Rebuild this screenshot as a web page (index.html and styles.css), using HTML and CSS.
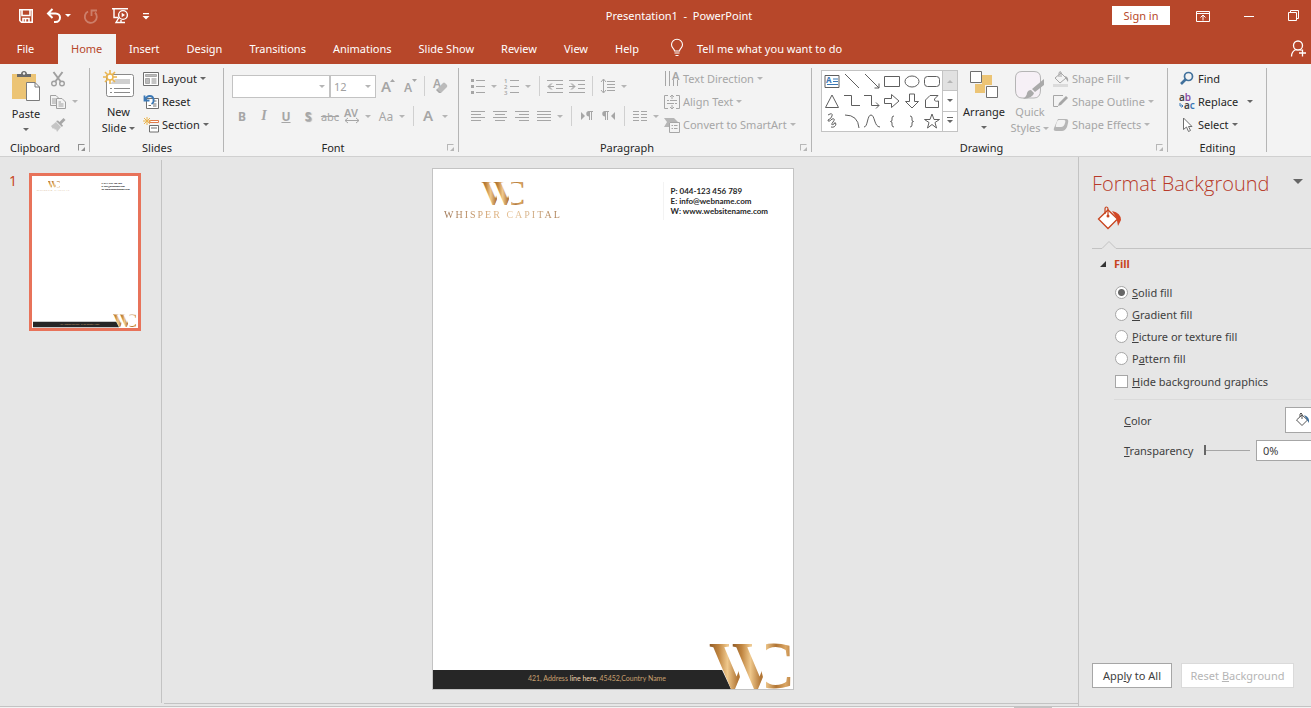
FILE: index.html
```html
<!DOCTYPE html>
<html lang="en">
<head>
    <meta charset="UTF-8">
    <meta name="viewport" content="width=device-width, initial-scale=1.0">
    <title>Presentation1 - PowerPoint</title>
    <link rel="stylesheet" href="styles.css">
</head>
<body>

    <!-- gradient and monogram shared by the slide and its thumbnail -->
    <svg class="defs" width="0" height="0" aria-hidden="true">
        <defs>
            <linearGradient id="gold" x1="0" y1="0" x2="1" y2="0">
                <stop offset="0" stop-color="#8f5a26"/>
                <stop offset="0.2" stop-color="#c08540"/>
                <stop offset="0.38" stop-color="#efc88c"/>
                <stop offset="0.6" stop-color="#b07434"/>
                <stop offset="0.8" stop-color="#dba765"/>
                <stop offset="1" stop-color="#a86c30"/>
            </linearGradient>
            <clipPath id="cut-v">
                <path d="M0 0H22L31 34L26 46H0Z"/>
            </clipPath>
            <clipPath id="cut-c">
                <path d="M57 0H82V17H70V9H57ZM57 38H70V34H82V46H57Z"/>
            </clipPath>
            <symbol id="monogram" viewBox="0 0 84 46">
                <g font-family="Liberation Serif, serif" font-weight="bold" font-size="67" fill="url(#gold)">
                    <text x="0" y="45" clip-path="url(#cut-v)">V</text>
                    <g transform="translate(23 0)"><text x="0" y="45" clip-path="url(#cut-v)">V</text></g>
                    <text x="38" y="45" clip-path="url(#cut-c)">C</text>
                </g>
            </symbol>
        </defs>
    </svg>

    <header class="titlebar">
        <div class="quick-access">
            <button title="Save"><svg width="16" height="16" viewBox="0 0 16 16" fill="none" stroke="#fff" stroke-width="1.6"><path d="M1.8 1.8H14.2V14.2H3.5L1.8 12.5Z"/><path d="M4 2V7.5H12V2M5 14V10.5H11V14" /><path d="M7.5 11V14"/></svg></button>
            <button class="undo" title="Undo"><svg width="16" height="16" viewBox="0 0 16 16" fill="none" stroke="#fff" stroke-width="2"><path d="M6.500 1L2 5.500L6.500 10M2 5.500H9.500C12.500 5.500 14 7.500 14 9.500S12.500 14 9.500 14H8"/></svg><i class="caret"></i></button>
            <button class="faded" title="Repeat"><svg width="16" height="16" viewBox="0 0 16 16" fill="none" stroke="#fff" stroke-width="1.8"><path d="M5 3.500A6 6 0 1 0 12 4.500M8.500 8V2.500H14"/></svg></button>
            <button title="Start From Beginning"><svg width="18" height="17" viewBox="0 0 18 17" fill="none" stroke="#fff" stroke-width="1.4"><path d="M1 1.7H17M3 2V10.5H7M8 10.5L5 15.5H14M10 15.5V13"/><circle cx="12" cy="8" r="4.4" fill="#b7472a"/><path d="M10.7 5.8V10.2L14 8Z" fill="#fff" stroke="none"/></svg></button>
            <button title="Customize"><svg width="10" height="10" viewBox="0 0 10 10" fill="#fff"><path d="M2 2H8V3.2H2ZM1.5 5H8.5L5 8.5Z"/></svg></button>
        </div>
        <h1>Presentation1 &nbsp;-&nbsp; PowerPoint</h1>
        <div class="window-controls">
            <button class="sign-in">Sign in</button>
            <button title="Ribbon Display Options"><svg width="14" height="12" viewBox="0 0 14 12" fill="none" stroke="#fff"><path d="M.5 1.5H13.5V11.5H.5ZM.5 3.5H13.5M7 10.5V5.5M4.5 7.5L7 5L9.5 7.5"/></svg></button>
            <button title="Minimize"><svg width="10" height="10" viewBox="0 0 10 10" stroke="#fff"><path d="M0 5.5H10"/></svg></button>
            <button title="Restore"><svg width="11" height="11" viewBox="0 0 11 11" fill="none" stroke="#fff"><path d="M.5 2.5H8.5V10.5H.5ZM2.5 2.5V.5H10.5V8.5H8.5"/></svg></button>
        </div>
    </header>

    <nav class="tabs">
        <button class="file">File</button>
        <button class="active">Home</button>
        <button>Insert</button>
        <button>Design</button>
        <button>Transitions</button>
        <button>Animations</button>
        <button>Slide Show</button>
        <button>Review</button>
        <button>View</button>
        <button>Help</button>
        <button class="tell-me"><svg width="14" height="18" viewBox="0 0 14 18" fill="none" stroke="#fff" stroke-width="1.1"><path d="M4.500 12C4.500 9.500 1.500 9 1.500 5.800A5.200 5.200 0 0 1 12.500 5.800C12.500 9 9.500 9.500 9.500 12ZM4.500 14H9.500M5.500 16.500H8.500"/></svg>Tell me what you want to do</button>
        <button class="share" title="Share"><svg width="17" height="18" viewBox="0 0 17 18" fill="none" stroke="#fff" stroke-width="1.3"><circle cx="8" cy="5.500" r="4.500"/><path d="M1.500 16.500C1.500 12.500 3.500 10.500 6 9.500M10 9.500L11.500 10.500M12.500 9.500V16.500M9 13H16"/></svg></button>
    </nav>

    <div class="ribbon">
        <section class="group clipboard">
            <div class="group-body">
                <button class="big"><svg width="30" height="32" viewBox="0 0 30 32"><path d="M1 4H25V29H1Z" fill="#ecc475"/><path d="M6 7V4H10C10 0 16 0 16 4H20V7Z" fill="#6a6a6a"/><circle cx="13" cy="3.500" r="1.200" fill="#f3f3f3"/><path d="M15.500 12.500H24L28.500 17V30.500H15.500Z" fill="#fff" stroke="#7b7b7b"/><path d="M24 12.500V17H28.500" fill="none" stroke="#7b7b7b"/></svg><span>Paste</span><i class="caret"></i></button>
                <div class="stack off">
                    <button title="Cut"><svg class="paper" width="16" height="16" viewBox="0 0 16 16" stroke="#a0a0a0" stroke-width="1.400"><path d="M3.500 1L11 11M12.500 1L5 11" stroke-width="2"/><circle cx="4" cy="12.500" r="2.300"/><circle cx="12" cy="12.500" r="2.300"/></svg></button>
                    <button title="Copy"><svg class="paper" width="16" height="16" viewBox="0 0 16 16" stroke="#a0a0a0"><path d="M.5 1.500H6L8.500 4V11.500H.5ZM2 5H6M2 7H6M2 9H6"/><path d="M6.500 4.500H12L15.500 8V14.500H6.500ZM8.500 8H11M8.500 10H13.500M8.500 12H13.500"/></svg><i class="caret"></i></button>
                    <button title="Format Painter"><svg width="16" height="16" viewBox="0 0 16 16"><path d="M1 9L6 5L11 10L7 15L6 12L5 13L4 11L3 12Z" opacity=".6"/><path d="M6 4L12 10L13 8.500L11.500 7L15.500 3L13.500 1L9.500 5L8 3.500Z"/></svg></button>
                </div>
            </div>
            <h2>Clipboard</h2><i class="launcher"></i>
        </section>

        <section class="group slides">
            <div class="group-body">
                <button class="big"><svg width="32" height="30" viewBox="0 0 32 30"><path d="M3.500 6.500Q3.500 4.500 5.500 4.500H28.500Q30.500 4.500 30.500 6.500V24.500Q30.500 26.500 28.500 26.500H5.500Q3.500 26.500 3.500 24.500Z" fill="#fff" stroke="#8a8a8a"/><path d="M12 9H27V14H8V13Z" fill="#d0d0d0"/><path d="M7 18.500H9M11 18.500H27M7 22.500H9M11 22.500H27" stroke="#8a8a8a"/><g stroke="#eab54f" stroke-width="1.600"><path d="M7 0V4M7 10V14M0 7H4M10 7H14M2 2L5 5M9 9L12 12M12 2L9 5M2 12L5 9"/></g><circle cx="7" cy="7" r="3" fill="#fff" stroke="#eab54f" stroke-width="1.500"/></svg><span>New</span><span>Slide<i class="caret"></i></span></button>
                <div class="stack">
                    <button><svg width="16" height="16" viewBox="0 0 16 16" fill="#fff" stroke="#6f6f6f"><path d="M.5 1.500H15.500V14.500H.5Z"/><path d="M2.500 3.500H13.500V5.500H2.500ZM2.500 7.500H6.500V12.500H2.500Z" fill="#bbb" stroke="#aaa"/><path d="M8.500 8H13.500M8.500 10H13.500M8.500 12H13.500" stroke="#888"/></svg>Layout<i class="caret"></i></button>
                    <button><svg width="16" height="16" viewBox="0 0 16 16" fill="#fff" stroke="#6f6f6f"><path d="M3.500 4.500H15.500V14.500H3.500Z"/><path d="M10 7H13.500M5.500 11.500H8M10 10H13.500M10 12H13.500"/><path d="M1.500 1.500V6.500H6.500M2 6C4 .5 10 1 10.500 5.500C11 8 9.500 9.500 8.500 10" fill="none" stroke="#3b78b5" stroke-width="1.800"/></svg>Reset</button>
                    <button><svg width="16" height="16" viewBox="0 0 16 16" fill="#fff" stroke="#6f6f6f"><path d="M6.500 3.500H15.500V5.500H6.500Z" stroke="#e07b4b"/><path d="M6.500 8.500H15.500V15H6.500ZM8 11H14"/><path d="M4 0V8M0 4H8M1 1L7 7M7 1L1 7" stroke="#eab54f"/></svg>Section<i class="caret"></i></button>
                </div>
            </div>
            <h2>Slides</h2>
        </section>

        <section class="group font off">
            <div class="group-body rows">
                <div class="row">
                    <div class="combo family"><select aria-label="Font"><option></option></select><i class="caret"></i></div>
                    <div class="combo size"><select aria-label="Font size"><option>12</option></select><i class="caret"></i></div>
                    <button class="tool" title="Increase Font Size"><svg width="16" height="16" viewBox="0 0 16 16"><text x="2" y="14" class="glyph g15">A</text><path d="M11 4L13.500 1L16 4Z"/></svg></button>
                    <button class="tool" title="Decrease Font Size"><svg width="16" height="16" viewBox="0 0 16 16"><text x="3" y="14" class="glyph g12">A</text><path d="M11 1L13.500 4L16 1Z"/></svg></button>
                    <i class="divider"></i>
                    <button class="tool" title="Clear Formatting"><svg width="16" height="16" viewBox="0 0 16 16"><text x="1" y="10" class="glyph g12">A</text><path d="M5 11L11 5Q12 4 13 5L15 7Q15.500 8 15 9L9 15H8L5 12Z" fill="#bbb"/><path d="M5 11L9 15H7L4 12Z"/></svg></button>
                </div>
                <div class="row">
                    <button class="tool bold">B</button>
                    <button class="tool italic">I</button>
                    <button class="tool bold underline">U</button>
                    <button class="tool bold shadow">S</button>
                    <button class="tool strike">abc</button>
                    <button class="tool drop" title="Character Spacing"><svg width="16" height="16" viewBox="0 0 16 16"><text x="0" y="9" class="glyph g11">AV</text><path d="M1 12.500H15M4 10L1 12.500L4 15M12 10L15 12.500L12 15" class="line"/></svg><i class="caret"></i></button>
                    <button class="tool drop" title="Change Case"><span class="case">Aa</span><i class="caret"></i></button>
                    <i class="divider"></i>
                    <button class="tool drop" title="Font Color"><svg width="16" height="16" viewBox="0 0 16 16"><text x="2" y="13" class="glyph g15">A</text></svg><i class="caret"></i></button>
                </div>
            </div>
            <h2>Font</h2><i class="launcher"></i>
        </section>

        <section class="group paragraph off">
            <div class="group-body">
                <div class="rows">
                    <div class="row">
                        <button class="tool drop" title="Bullets"><svg width="16" height="16" viewBox="0 0 16 16"><path d="M1 1H4V4H1ZM1 7H4V10H1ZM1 13H4V16H1Z"/><path d="M6 2.500H15M6 8.500H15M6 14.500H15" class="line"/></svg><i class="caret"></i></button>
                        <button class="tool drop" title="Numbering"><svg width="16" height="16" viewBox="0 0 16 16"><g class="glyph g6"><text x="0" y="5">1</text><text x="0" y="11">2</text><text x="0" y="17">3</text></g><path d="M6 2.500H15M6 8.500H15M6 14.500H15" class="line"/></svg><i class="caret"></i></button>
                        <i class="divider"></i>
                        <button class="tool" title="Decrease List Level"><svg width="16" height="16" viewBox="0 0 16 16"><path d="M0 2.500H16M9 6.500H16M9 10.500H16M0 14.500H16M1 8.500H7M4 5.500L1 8.500L4 11.500M5 5.500L2 8.500L5 11.500" class="line"/></svg></button>
                        <button class="tool" title="Increase List Level"><svg width="16" height="16" viewBox="0 0 16 16"><path d="M0 2.500H16M9 6.500H16M9 10.500H16M0 14.500H16M0 8.500H6M3 5.500L6 8.500L3 11.500M2 5.500L5 8.500L2 11.500" class="line"/></svg></button>
                        <i class="divider"></i>
                        <button class="tool drop" title="Line Spacing"><svg width="16" height="16" viewBox="0 0 16 16"><path d="M7 3.500H15M7 6.500H15M7 9.500H15M7 12.500H15M3.500 1.500V14.500M1 4L3.500 1L6 4M1 12L3.500 15L6 12" class="line"/></svg><i class="caret"></i></button>
                    </div>
                    <div class="row">
                        <button class="tool" title="Align Left"><svg width="14" height="12" viewBox="0 0 14 12"><path d="M0 1.500H14M0 4.500H10M0 7.500H14M0 10.500H10" class="line"/></svg></button>
                        <button class="tool" title="Center"><svg width="14" height="12" viewBox="0 0 14 12"><path d="M0 1.500H14M2 4.500H12M0 7.500H14M2 10.500H12" class="line"/></svg></button>
                        <button class="tool" title="Align Right"><svg width="14" height="12" viewBox="0 0 14 12"><path d="M0 1.500H14M4 4.500H14M0 7.500H14M4 10.500H14" class="line"/></svg></button>
                        <button class="tool drop" title="Justify"><svg width="16" height="12" viewBox="0 0 16 12"><path d="M1 1.500H15M1 4.500H15M1 7.500H15M1 10.500H15" class="line"/></svg><i class="caret"></i></button>
                        <i class="divider"></i>
                        <button class="tool" title="Left-to-Right"><svg width="14" height="12" viewBox="0 0 14 12"><path d="M1 2L5 6L1 10ZM10 1H9A2.500 2.500 0 0 0 9 6.500H10Z"/><path d="M8.500 1.500H13M9.500 1V10M11.500 1V10" class="line"/></svg></button>
                        <button class="tool" title="Right-to-Left"><svg width="14" height="12" viewBox="0 0 14 12"><path d="M13 2L9 6L13 10ZM4 1H3A2.500 2.500 0 0 0 3 6.500H4Z"/><path d="M2.500 1.500H7M3.500 1V10M5.500 1V10" class="line"/></svg></button>
                        <i class="divider"></i>
                        <button class="tool drop" title="Columns"><svg width="16" height="12" viewBox="0 0 16 12"><path d="M1 1.500H7M9 1.500H15M1 4.500H7M9 4.500H15M1 7.500H7M9 7.500H15M1 10.500H7M9 10.500H15" class="line"/></svg><i class="caret"></i></button>
                    </div>
                </div>
                <div class="stack">
                    <button><svg width="16" height="16" viewBox="0 0 16 16"><path d="M1.500 0V15M5.500 0V15M9.500 9V15M13.500 9V15" class="line"/><text x="8" y="9" class="glyph g11">A</text></svg>Text Direction<i class="caret"></i></button>
                    <button><svg width="16" height="16" viewBox="0 0 16 16"><path d="M4 1.500H.5V14.500H4M12 1.500H15.500V14.500H12M3 6.500H5M6 6.500H13M3 9.500H10M11 9.500H13M8 1V5M8 11V15M6 3L8 1L10 3M6 13L8 15L10 13" class="line"/></svg>Align Text<i class="caret"></i></button>
                    <button><svg width="16" height="16" viewBox="0 0 16 16"><path d="M0 1H10L14 5H5V10H0L3 5Z" opacity=".8"/><path d="M5.500 5.500H15.500V15.500H5.500Z" class="line"/><path d="M7.500 8.500H9M10 8.500H13.500M7.500 11.500H9M10 11.500H13.500" class="line"/></svg>Convert to SmartArt<i class="caret"></i></button>
                </div>
            </div>
            <h2>Paragraph</h2><i class="launcher"></i>
        </section>

        <section class="group drawing">
            <div class="group-body">
                <div class="gallery">
                    <div class="shapes">
                        <svg viewBox="0 0 20 20"><path d="M3 4.500H17V16.500H3Z"/><text x="4" y="12" class="letter">A</text><path d="M11 8H16M11 10.500H16M5 13.500H16" stroke="#3b78b5"/></svg>
                        <svg viewBox="0 0 20 20"><path d="M3 3L17 17"/></svg>
                        <svg viewBox="0 0 20 20"><path d="M3 3L17 17M17 12.500V17H12.500"/></svg>
                        <svg viewBox="0 0 20 20"><path d="M2.500 5.500H17.500V15.500H2.500Z"/></svg>
                        <svg viewBox="0 0 20 20"><ellipse cx="10" cy="10.500" rx="7" ry="5.500"/></svg>
                        <svg viewBox="0 0 20 20"><rect x="2.500" y="5.500" width="15" height="10" rx="3"/></svg>
                        <svg viewBox="0 0 20 20"><path d="M10 4L16.500 16.500H3.500Z"/></svg>
                        <svg viewBox="0 0 20 20"><path d="M2 4.500H9.500V14.500H18"/></svg>
                        <svg viewBox="0 0 20 20"><path d="M2 4.500H9.500V14.500H17M14 11.500L17 14.500L14 17.500"/></svg>
                        <svg viewBox="0 0 20 20"><path d="M2.500 7.500H9.500V3.500L17 10L9.500 16.500V12.500H2.500Z"/></svg>
                        <svg viewBox="0 0 20 20"><path d="M7.500 3H12.500V10.500H16.500L10 17L3.500 10.500H7.500Z"/></svg>
                        <svg viewBox="0 0 20 20"><path d="M3.500 9L8 4.500H16L12.500 8Q12 11 16.500 10V16.500H3.500Z"/></svg>
                        <svg viewBox="0 0 20 20"><path d="M6 4Q11 1 10 5Q9 8 6 9Q6 12 10 8Q14 7 11 11Q8 15 12 13Q13 10 14 13Q13 17 9 16"/></svg>
                        <svg viewBox="0 0 20 20"><path d="M3 4Q16 4 17 17"/></svg>
                        <svg viewBox="0 0 20 20"><path d="M2 16C6 16 5 4 9 4S12 16 18 16"/></svg>
                        <svg viewBox="0 0 20 20"><path d="M12 5Q10 5 10 7V9Q10 10.500 8.500 10.500Q10 10.500 10 12V14Q10 16 12 16"/></svg>
                        <svg viewBox="0 0 20 20"><path d="M8 5Q10 5 10 7V9Q10 10.500 11.500 10.500Q10 10.500 10 12V14Q10 16 8 16"/></svg>
                        <svg viewBox="0 0 20 20"><path d="M10 3L12 8.500H17.500L13 11.500L14.500 17L10 13.500L5.500 17L7 11.500L2.500 8.500H8Z"/></svg>
                    </div>
                    <div class="gallery-scroll">
                        <button class="dim" title="Row up"><svg width="8" height="8" viewBox="0 0 8 8"><path d="M1 6L4 3L7 6Z" fill="#b5b5b5"/></svg></button>
                        <button title="Row down"><i class="caret"></i></button>
                        <button title="More"><svg width="8" height="8" viewBox="0 0 8 8"><path d="M1 0H7V1H1ZM1 3H7L4 6Z" fill="#666"/></svg></button>
                    </div>
                </div>
                <button class="big arrange"><svg width="28" height="30" viewBox="0 0 28 30"><path d="M12 5H22V15H12ZM5 14H15V23H5Z" fill="#ecc475"/><path d="M.5 1.500H11.500V12.500H.5ZM16.500 16.500H27.500V27.500H16.500Z" fill="#fff" stroke="#6f6f6f"/></svg><span>Arrange</span><i class="caret"></i></button>
                <button class="big off"><svg width="32" height="30" viewBox="0 0 32 30"><path d="M8 1.500H20Q26.500 1.500 26.500 8V20Q26.500 28 20 28H8Q1.500 28 1.500 20V8Q1.500 1.500 8 1.500Z" fill="#f6f0f6" stroke="#b5b5b5"/><path d="M30 9V15L21 22L18 19ZM17 20L20 23Q19 28 9 29Q13 26 13 23Q14 20 17 20Z" fill="#aaa"/></svg><span>Quick</span><span>Styles<i class="caret"></i></span></button>
                <div class="stack off">
                    <button><svg width="16" height="16" viewBox="0 0 16 16"><path d="M2 7L8 2L13 7L7 12ZM6 6V2Q6.500 0 8 1V6" class="line"/><path d="M12 5Q16 6 15 11L13 8Z"/><path d="M0 13H15V16H0Z" opacity=".3"/></svg>Shape Fill<i class="caret"></i></button>
                    <button><svg width="16" height="16" viewBox="0 0 16 16"><path d="M10 1.500H.5V12.500H5" class="line"/><path d="M5 12L6 9L13 2L15 4L8 11Z"/></svg>Shape Outline<i class="caret"></i></button>
                    <button><svg width="16" height="16" viewBox="0 0 16 16"><path d="M5 2H13Q16 2 15 6L14 10Q12 14 9 14H3Q0 14 1 11Z" opacity=".8"/><path d="M6 3H11Q13 3 12 6Q11 10 8 10H4Q2 10 3 8Q4 3 6 3Z" fill="#f3f3f3"/></svg>Shape Effects<i class="caret"></i></button>
                </div>
            </div>
            <h2>Drawing</h2><i class="launcher"></i>
        </section>

        <section class="group editing">
            <div class="group-body">
                <div class="stack">
                    <button><svg width="16" height="16" viewBox="0 0 16 16" fill="none" stroke="#41719c"><circle cx="9.500" cy="5.500" r="4" stroke-width="1.700"/><path d="M6.500 8.500L2 13" stroke-width="2.600"/></svg>Find</button>
                    <button class="replace"><svg width="16" height="16" viewBox="0 0 16 16"><g class="letters"><text x="0" y="7">a<tspan fill="#8a4fa3">b</tspan></text><text x="5" y="15">a<tspan fill="#3b78b5">c</tspan></text></g><path d="M1 9V12H4M2.500 10.500L4 12L2.500 13.500" fill="none" stroke="#3b78b5"/></svg>Replace<i class="caret"></i></button>
                    <button><svg width="16" height="16" viewBox="0 0 16 16" fill="#fff" stroke="#6f6f6f"><path d="M4.500 1V12.500L7.500 10L9.500 14.500L11.500 13.500L9.500 9.500H13Z"/></svg>Select<i class="caret"></i></button>
                </div>
            </div>
            <h2>Editing</h2>
        </section>
    </div>

    <div class="workspace">
        <aside class="slide-list">
            <span class="slide-number">1</span>
            <button class="thumbnail" title="Slide 1">
                <svg viewBox="0 0 360 520">
                    <rect width="360" height="520" fill="#fff"/>
                    <use href="#monogram" x="51" y="13" width="44" height="24"/>
                    <text x="12" y="49" class="thumb-brand">WHISPER CAPITAL</text>
                    <g class="thumb-contact">
                        <text x="237" y="25">P: 044-123 456 789</text>
                        <text x="237" y="35">E: info@webname.com</text>
                        <text x="237" y="45">W: www.websitename.com</text>
                    </g>
                    <path d="M0 501H288L298 520H0Z" fill="#262626"/>
                    <text x="92" y="513" class="thumb-address">421, Address line here, 45452,Country Name</text>
                    <use href="#monogram" x="276" y="475" width="84" height="46"/>
                </svg>
            </button>
        </aside>

        <main class="canvas">
            <article class="slide">
                <div class="letterhead">
                    <div class="brand">
                        <svg width="44" height="24"><use href="#monogram" width="44" height="24"/></svg>
                        <p>WHISPER CAPITAL</p>
                    </div>
                    <address>P: 044-123 456 789<br>E: info@webname.com<br>W: www.websitename.com</address>
                </div>
                <div class="slide-footer">
                    <p>421, Address <b>line here,</b> 45452,Country Name</p>
                    <svg width="84" height="46"><use href="#monogram" width="84" height="46"/></svg>
                </div>
            </article>
        </main>

        <aside class="format-pane">
            <div class="pane-title"><h2>Format Background</h2><i class="caret"></i></div>
            <svg class="pane-icon" width="26" height="26" viewBox="0 0 26 26"><path d="M1.500 13L11 4L20.500 13L11 22.500Z" fill="#fff" stroke="#c8451f" stroke-width="1.300"/><path d="M8 8V3Q8 1 9.500 1T11 3V9" fill="none" stroke="#c8451f" stroke-width="1.200"/><circle cx="11" cy="10" r="1.500" fill="#c8451f"/><path d="M15 5Q24 7 24 14L21 20L19.500 12Z" fill="#d24726"/></svg>
            <svg class="pane-notch" width="232" height="9" viewBox="0 0 232 9"><path d="M0 8.500H10L17 1.500L24 8.500H232" fill="none" stroke="#c3c3c3"/></svg>
            <h3><svg width="8" height="8" viewBox="0 0 8 8"><path d="M7 1V7H1Z" fill="#333"/></svg>Fill</h3>
            <div class="options">
                <label><input type="radio" name="fill" checked><span><u>S</u>olid fill</span></label>
                <label><input type="radio" name="fill"><span><u>G</u>radient fill</span></label>
                <label><input type="radio" name="fill"><span><u>P</u>icture or texture fill</span></label>
                <label><input type="radio" name="fill"><span>P<u>a</u>ttern fill</span></label>
                <label class="hide-graphics"><input type="checkbox"><span><u>H</u>ide background graphics</span></label>
            </div>
            <div class="field color">
                <label for="color"><u>C</u>olor</label>
                <button id="color" title="Fill color"><svg width="18" height="16" viewBox="0 0 18 16"><path d="M1.500 8L7 3L12.500 8L7 13.500Z" fill="#fff" stroke="#555"/><path d="M5 5V2Q6 0 7 2V7" fill="none" stroke="#555"/><path d="M9 3Q15 5 14 11L12 8Z" fill="#41719c"/></svg></button>
            </div>
            <div class="field">
                <label for="transparency"><u>T</u>ransparency</label>
                <input type="range" id="transparency" min="0" max="100" value="0">
                <input type="text" class="percent" aria-label="Transparency percent" value="0%">
            </div>
            <div class="pane-buttons">
                <button>App<u>l</u>y to All</button>
                <button disabled>Reset <u>B</u>ackground</button>
            </div>
        </aside>
    </div>
    <footer class="scroll-strip"><i></i></footer>

</body>
</html>
```
FILE: styles.css
```css
* {
    box-sizing: border-box;
}

body {
    margin: 0;
    height: 100vh;
    display: flex;
    flex-direction: column;
    overflow: hidden;
    background: #e6e6e6;
    color: #262626;
    font-family: "Noto Sans", "Open Sans", sans-serif;
    font-size: 11px;
}

button {
    margin: 0;
    padding: 0;
    border: none;
    background: none;
    color: inherit;
    font: inherit;
    white-space: nowrap;
}

h1, h2, h3, p {
    margin: 0;
    font-size: 11px;
    font-weight: normal;
}

svg {
    flex: none;
    display: block;
    overflow: visible;
}

.defs {
    position: absolute;
}

.caret {
    display: inline-block;
    flex: none;
    border: 3px solid transparent;
    border-top-color: #666;
    border-bottom: none;
}

/* title bar */

.titlebar {
    display: grid;
    grid-template-columns: 1fr auto 1fr;
    align-items: center;
    height: 32px;
    padding: 0 12px 1px 18px;
    background: #b7472a;
    color: #fff;
}

.titlebar h1 {
    padding-left: 41px;
}

.titlebar .caret {
    border-top-color: #fff;
}

.quick-access {
    display: flex;
    align-items: center;
    gap: 12px;
}

.undo {
    display: flex;
    align-items: center;
    gap: 3px;
}

.faded {
    opacity: 0.3;
}

.window-controls {
    display: flex;
    align-items: center;
    justify-content: flex-end;
    gap: 34px;
}

.sign-in {
    width: 58px;
    height: 19px;
    margin-right: -8px;
    background: #fff;
    color: #b7472a;
}

/* ribbon tabs */

.tabs {
    display: flex;
    height: 32px;
    padding-top: 2px;
    background: #b7472a;
    color: #fff;
}

.tabs button {
    padding: 0 14px 2px 13px;
}

.tabs .file {
    width: 52px;
    margin-right: 6px;
}

.tabs .active {
    width: 58px;
    background: #f3f3f3;
    color: #b7472a;
}

.tabs .tell-me {
    display: flex;
    align-items: center;
    gap: 13px;
    margin-left: 4px;
}

.tabs .share {
    margin-left: auto;
    padding: 0 4px;
}

/* ribbon */

.ribbon {
    display: flex;
    height: 93px;
    background: #f3f3f3;
    border-bottom: 1px solid #d0d0d0;
}

.group {
    position: relative;
    flex: none;
    display: flex;
    flex-direction: column;
    justify-content: space-between;
    padding-top: 3px;
}

.group::after {
    content: "";
    position: absolute;
    top: 4px;
    right: 0;
    bottom: 4px;
    border-right: 1px solid #b5b5b5;
}

.group h2 {
    line-height: 16px;
    text-align: center;
}

.clipboard { width: 90px; }
.slides { width: 134px; }
.font { width: 235px; }
.paragraph { width: 353px; }
.drawing { width: 356px; }
.editing { width: 99px; }

.clipboard h2 {
    padding-right: 20px;
}

.font h2, .paragraph h2, .drawing h2 {
    padding-right: 17px;
}

.off {
    color: #a6a6a6;
}

.off h2 {
    color: #262626;
}

.off .caret {
    border-top-color: #b5b5b5;
}

.launcher {
    position: absolute;
    right: 5px;
    bottom: 5px;
    width: 7px;
    height: 7px;
    border: 1px solid #909090;
    border-right-color: transparent;
    border-bottom-color: transparent;
}

.launcher::after {
    content: "";
    position: absolute;
    right: -1px;
    bottom: -1px;
    border: 2px solid #909090;
    border-top-color: transparent;
    border-left-color: transparent;
}

.off .launcher, .drawing .launcher {
    opacity: 0.6;
}

.group-body {
    display: flex;
}

.big {
    display: flex;
    flex-direction: column;
    align-items: center;
    height: 69px;
    padding-top: 3px;
    line-height: 16px;
}

.big svg {
    margin-bottom: 4px;
}

.big > .caret {
    margin-top: 6px;
}

.big span .caret {
    margin: 0 0 2px 3px;
}

.stack button {
    display: flex;
    align-items: center;
    gap: 3px;
    height: 23px;
}

.clipboard .big {
    width: 48px;
    padding-left: 4px;
}

.clipboard .stack {
    padding-left: 2px;
}

.clipboard .stack button {
    gap: 6px;
}

.slides .big {
    width: 53px;
    padding-left: 4px;
}

.rows {
    display: flex;
    flex-direction: column;
    padding-top: 4px;
}

.row {
    display: flex;
    align-items: center;
    height: 30px;
}

.font .rows {
    padding-left: 7px;
}

.paragraph .group-body {
    padding-left: 8px;
}

.paragraph .stack {
    padding-left: 1px;
}

.combo {
    position: relative;
    height: 23px;
}

.combo select {
    appearance: none;
    width: 100%;
    height: 100%;
    padding: 0 3px;
    border: 1px solid #c3c3c3;
    border-radius: 0;
    background: #fff;
    color: #a0a0a0;
    font: inherit;
}

.combo .caret {
    position: absolute;
    top: 10px;
    right: 5px;
}

.family {
    width: 98px;
    margin-left: 1px;
}

.size {
    width: 46px;
}

.tool {
    display: flex;
    align-items: center;
    justify-content: center;
    width: 22px;
    height: 22px;
}

.drop {
    width: 34px;
    gap: 5px;
    justify-content: flex-start;
    padding-left: 3px;
}

.divider {
    width: 1px;
    height: 20px;
    margin: 0 4px;
    background: #d0d0d0;
}

.off svg {
    fill: #a6a6a6;
}

.off .paper {
    fill: #f3f3f3;
}

.line {
    stroke: #a6a6a6;
    fill: none;
}

.glyph {
    font-weight: 600;
}

.g6 { font-size: 6px; }
.g11 { font-size: 11px; }
.g12 { font-size: 12px; }
.g15 { font-size: 15px; }

.bold {
    font-size: 12px;
    font-weight: 700;
}

.italic {
    font-family: "Liberation Serif", serif;
    font-size: 14px;
    font-style: italic;
    font-weight: 700;
}

.underline {
    text-decoration: underline;
}

.shadow {
    text-shadow: 1px 1px 1px #aaa;
}

.strike {
    text-decoration: line-through;
}

.case {
    width: 16px;
    font-size: 12px;
}

/* drawing group */

.gallery {
    display: flex;
    height: 62px;
    margin: 3px 0 0 9px;
    border: 1px solid #c3c3c3;
    background: #fff;
}

.shapes {
    display: grid;
    grid-template-columns: repeat(6, 20px);
    grid-auto-rows: 20px;
    fill: none;
    stroke: #5f5f5f;
}

.shapes .letter {
    fill: #3b78b5;
    stroke: none;
    font-size: 8px;
    font-weight: 700;
}

.gallery-scroll {
    display: flex;
    flex-direction: column;
    width: 15px;
    border-left: 1px solid #c3c3c3;
}

.gallery-scroll button {
    flex: 1;
    display: flex;
    align-items: center;
    justify-content: center;
}

.gallery-scroll button + button {
    border-top: 1px solid #c3c3c3;
}

.gallery-scroll .dim {
    background: #e1e1e1;
}

.drawing .big {
    width: 46px;
}

.drawing .arrange {
    margin-left: 3px;
}

.editing .stack {
    padding-left: 11px;
}

.editing .replace .caret {
    margin-left: 6px;
}

.letters {
    fill: #444;
    font-size: 10px;
    font-weight: 600;
}

/* workspace */

.workspace {
    flex: 1;
    display: flex;
    min-height: 0;
}

.slide-list {
    flex: none;
    display: flex;
    align-items: flex-start;
    width: 162px;
    margin: 3px 0;
    padding: 13px 0 0 9px;
    border-right: 1px solid #c3c3c3;
}

.slide-number {
    width: 20px;
    color: #c8451f;
    font-size: 14px;
    line-height: 16px;
}

.thumbnail {
    width: 112px;
    padding: 1px;
    border: 3px solid #e8735a;
    background: #fff;
}

.thumb-brand {
    fill: #c9a070;
    font-family: "Liberation Serif", serif;
    font-size: 10px;
    letter-spacing: 2px;
}

.thumb-contact {
    fill: #111;
    font-family: Lato, sans-serif;
    font-size: 8px;
    font-weight: 900;
}

.thumb-address {
    fill: #c9a070;
    font-family: Lato, sans-serif;
    font-size: 7px;
}

.canvas {
    flex: 1;
    display: flex;
    justify-content: center;
    margin: 0 0 2px 2px;
    padding: 11px 16px 0 0;
    border-bottom: 1px solid #c3c3c3;
}

.slide {
    display: flex;
    flex-direction: column;
    justify-content: space-between;
    width: 362px;
    height: 522px;
    border: 1px solid #c3c3c3;
    background: #fff;
}

.letterhead {
    display: flex;
    justify-content: space-between;
    padding: 13px 25px 0 11px;
}

.brand {
    display: flex;
    flex-direction: column;
    align-items: center;
}

.brand p {
    background: linear-gradient(90deg, #9c7250, #d9a873 40%, #e8c79d 60%, #a87a50);
    background-clip: text;
    color: transparent;
    font-family: "Liberation Serif", serif;
    font-size: 10px;
    line-height: 18px;
    letter-spacing: 2px;
}

.letterhead address {
    height: 38px;
    padding: 4px 0 0 7px;
    border-left: 1px solid #f3f3f3;
    color: #262626;
    font-family: Lato, sans-serif;
    font-size: 8px;
    font-style: normal;
    font-weight: 700;
    line-height: 10px;
}

.slide-footer {
    position: relative;
    display: flex;
    justify-content: flex-end;
    align-items: flex-end;
}

.slide-footer p {
    position: absolute;
    left: 0;
    right: 62px;
    bottom: 0;
    height: 19px;
    background: #262626;
    clip-path: polygon(0 0, 97% 0, 100% 100%, 0 100%);
    color: #c9a070;
    font-family: Lato, sans-serif;
    font-size: 7px;
    line-height: 17px;
    text-align: center;
    text-indent: 30px;
}

.slide-footer b {
    color: #f0d5b0;
    font-weight: normal;
}

.slide-footer svg {
    position: relative;
}

/* format pane */

.format-pane {
    flex: none;
    display: flex;
    flex-direction: column;
    width: 233px;
    padding: 11px 0 18px 13px;
    border-left: 1px solid #c3c3c3;
    color: #404040;
    overflow: hidden;
}

.pane-title {
    display: flex;
    align-items: center;
    justify-content: space-between;
    padding-right: 8px;
}

.pane-title h2 {
    color: #b83b2a;
    font-family: "Open Sans", "Noto Sans", sans-serif;
    font-size: 20px;
    font-weight: 300;
    line-height: 32px;
    white-space: nowrap;
}

.pane-title .caret {
    border-width: 5px;
    border-bottom: none;
    margin-bottom: 6px;
}

.pane-icon {
    margin: 6px 0 0 5px;
}

.pane-notch {
    margin-top: 8px;
}

.format-pane h3 {
    display: flex;
    align-items: center;
    gap: 7px;
    padding-left: 7px;
    color: #c8451f;
    font-weight: 700;
    line-height: 30px;
}

.options {
    display: flex;
    flex-direction: column;
    margin-left: 22px;
    padding: 2px 0 5px 1px;
    border-bottom: 1px solid #dadada;
}

.options label {
    display: flex;
    align-items: center;
    gap: 4px;
    height: 22px;
    white-space: nowrap;
}

.options .hide-graphics {
    height: 25px;
}

.options input {
    appearance: none;
    flex: none;
    width: 13px;
    height: 13px;
    margin: 0;
    border: 1px solid #a6a6a6;
    background: #fff;
}

.options input[type="radio"] {
    border-radius: 50%;
}

.options input[type="radio"]:checked {
    background: radial-gradient(circle, #666 3px, #fff 4px);
}

.field {
    display: flex;
    align-items: center;
    height: 30px;
    padding-left: 32px;
    white-space: nowrap;
}

.color {
    justify-content: space-between;
    margin-top: 5px;
}

.color button {
    width: 40px;
    height: 26px;
    margin-right: -14px;
    padding-left: 9px;
    border: 1px solid #a6a6a6;
    background: #fff;
}

.field input[type="range"] {
    appearance: none;
    flex: none;
    width: 46px;
    height: 10px;
    margin: 0 6px 0 auto;
    background: linear-gradient(#a6a6a6, #a6a6a6) center / 100% 1px no-repeat;
}

.field input[type="range"]::-webkit-slider-thumb {
    appearance: none;
    width: 2px;
    height: 10px;
    background: #666;
}

.percent {
    flex: none;
    width: 70px;
    height: 21px;
    margin-right: -15px;
    padding: 0 6px;
    border: 1px solid #a6a6a6;
    background: #fff;
    color: #404040;
    font: inherit;
}

.pane-buttons {
    display: flex;
    gap: 9px;
    margin-top: auto;
}

.pane-buttons button {
    width: 80px;
    height: 25px;
    border: 1px solid #a6a6a6;
    background: #fff;
}

.pane-buttons button:disabled {
    width: 113px;
    border-color: #dadada;
    color: #b5b5b5;
}

.scroll-strip {
    flex: none;
    height: 2px;
    border-top: 1px solid #c3c3c3;
    background: #f3f3f3;
}

.scroll-strip i {
    display: block;
    width: 38px;
    height: 1px;
    margin: 0 259px 0 auto;
    background: #c3c3c3;
}
```
